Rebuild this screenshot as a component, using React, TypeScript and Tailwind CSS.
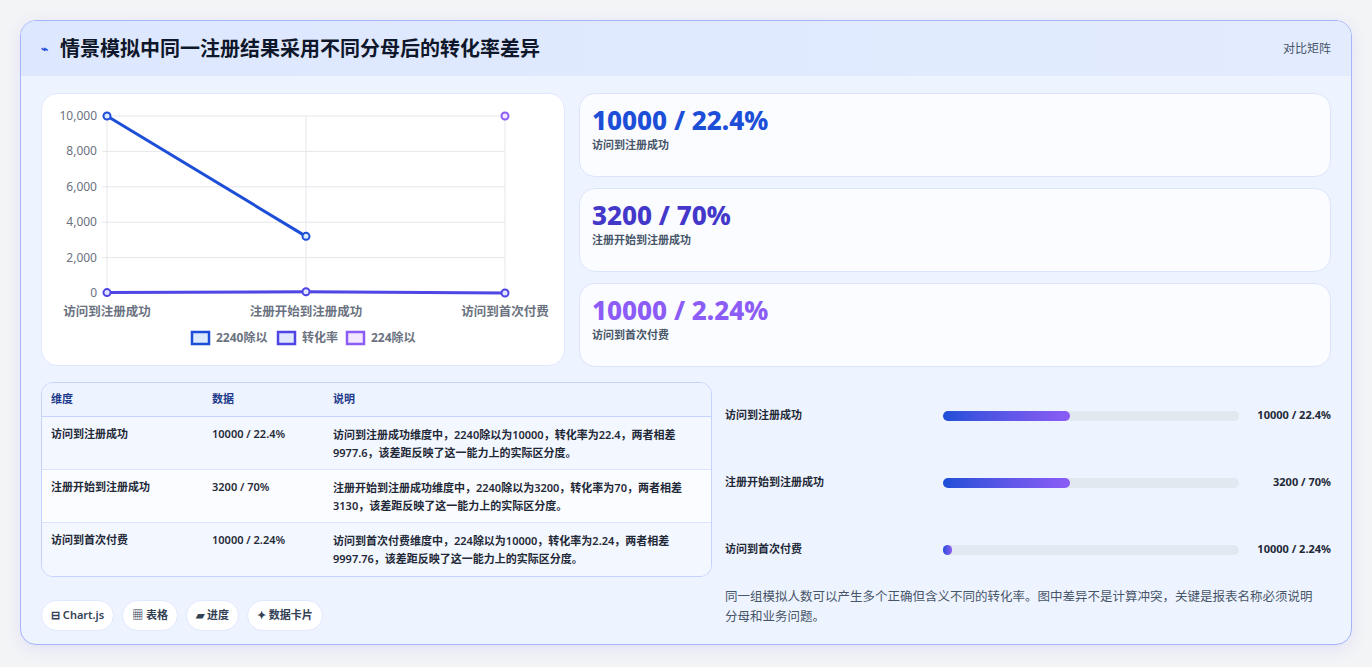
const font = { fontFamily: '"Noto Sans", "Noto Sans CJK SC", sans-serif' };

const stats = [
  { value: "10000 / 22.4%", label: "访问到注册成功", color: "text-[#1d4ed8]" },
  { value: "3200 / 70%", label: "注册开始到注册成功", color: "text-[#4338ca]" },
  { value: "10000 / 2.24%", label: "访问到首次付费", color: "text-[#8b5cf6]" },
];

const rows = [
  {
    dim: "访问到注册成功",
    data: "10000 / 22.4%",
    note: "访问到注册成功维度中，2240除以为10000，转化率为22.4，两者相差9977.6，该差距反映了这一能力上的实际区分度。",
  },
  {
    dim: "注册开始到注册成功",
    data: "3200 / 70%",
    note: "注册开始到注册成功维度中，2240除以为3200，转化率为70，两者相差3130，该差距反映了这一能力上的实际区分度。",
  },
  {
    dim: "访问到首次付费",
    data: "10000 / 2.24%",
    note: "访问到首次付费维度中，224除以为10000，转化率为2.24，两者相差9997.76，该差距反映了这一能力上的实际区分度。",
  },
];

const bars = [
  { label: "访问到注册成功", value: "10000 / 22.4%", pct: 43 },
  { label: "注册开始到注册成功", value: "3200 / 70%", pct: 43 },
  { label: "访问到首次付费", value: "10000 / 2.24%", pct: 3 },
];

function Chart() {
  const x = [105, 304, 503];
  const y = (v: number) => 292 - (v / 10000) * 177;
  const ticks = [0, 2000, 4000, 6000, 8000, 10000];
  return (
    <svg width="524" height="273" viewBox="40 93 524 273" className="block">
      {ticks.map((t) => (
        <g key={t}>
          <line x1={100} x2={503} y1={y(t)} y2={y(t)} stroke="#e5e7eb" />
          <text x={95} y={y(t) + 4} textAnchor="end" fontSize="12" fill="#6b7280">
            {t.toLocaleString()}
          </text>
        </g>
      ))}
      {x.map((xx) => (
        <line key={xx} x1={xx} x2={xx} y1={115} y2={296} stroke="#e5e7eb" />
      ))}
      {["访问到注册成功", "注册开始到注册成功", "访问到首次付费"].map((l, i) => (
        <text key={l} x={x[i]} y={315} textAnchor="middle" fontSize="12.5" fontWeight="700" fill="#6b7280">
          {l}
        </text>
      ))}
      <polyline points={`${x[0]},${y(10000)} ${x[1]},${y(3200)}`} fill="none" stroke="#1d4ed8" strokeWidth="3" />
      <circle cx={x[0]} cy={y(10000)} r="3.5" fill="#dbeafe" stroke="#1d4ed8" strokeWidth="2" />
      <circle cx={x[1]} cy={y(3200)} r="3.5" fill="#dbeafe" stroke="#1d4ed8" strokeWidth="2" />
      <polyline points={`${x[0]},${y(22.4)} ${x[1]},${y(70)} ${x[2]},${y(2.24)}`} fill="none" stroke="#4f46e5" strokeWidth="3" />
      {[22.4, 70, 2.24].map((v, i) => (
        <circle key={i} cx={x[i]} cy={y(v)} r="3.5" fill="#e0e7ff" stroke="#4f46e5" strokeWidth="2" />
      ))}
      <circle cx={x[2]} cy={y(10000)} r="3.5" fill="#f3e8ff" stroke="#8b5cf6" strokeWidth="2" />
      {[
        { x: 190, c: "#1d4ed8", f: "#dbeafe", t: "2240除以" },
        { x: 276, c: "#4f46e5", f: "#e0e7ff", t: "转化率" },
        { x: 345, c: "#8b5cf6", f: "#f3e8ff", t: "224除以" },
      ].map((l) => (
        <g key={l.t}>
          <rect x={l.x} y={331} width={17} height={12} fill={l.f} stroke={l.c} strokeWidth="2.5" />
          <text x={l.x + 24} y={341} fontSize="12" fontWeight="700" fill="#6b7280">
            {l.t}
          </text>
        </g>
      ))}
    </svg>
  );
}

export default function App() {
  return (
    <div style={font} className="min-h-[667px] bg-[#f3f4f6] p-5">
      <div className="rounded-2xl border border-[#a5b4fc] bg-[#eef4ff] overflow-hidden shadow-[0_4px_16px_rgba(99,102,241,0.12)]">
        <div className="flex h-[55px] items-center justify-between bg-gradient-to-r from-[#dde7fe] to-[#e3ecfe] px-5">
          <h1 className="flex items-center gap-3 text-[20px] font-bold text-[#0f172a]">
            <span className="text-[12px] text-[#1d4ed8]">⌁</span>
            情景模拟中同一注册结果采用不同分母后的转化率差异
          </h1>
          <span className="text-[12px] text-[#475569]">对比矩阵</span>
        </div>
        <div className="flex flex-col gap-[15px] px-5 pt-[17px] pb-[13px]">
          <div className="flex gap-[14px]">
            <div className="w-[524px] h-[273px] rounded-2xl border border-[#e0e7ff] bg-white">
              <Chart />
            </div>
            <div className="flex flex-1 flex-col gap-[11px]">
              {stats.map((s) => (
                <div key={s.value} className="h-[84px] rounded-2xl border border-[#dbe4fb] bg-[#fbfcff] px-3 pt-[9px]">
                  <div className={`text-[26px] font-extrabold leading-[34px] ${s.color}`}>{s.value}</div>
                  <div className="text-[11px] font-semibold text-[#475569]">{s.label}</div>
                </div>
              ))}
            </div>
          </div>
          <div className="flex gap-[13px]">
            <div className="w-[671px]">
              <div className="rounded-xl border border-[#c7d2fe] overflow-hidden text-[11px] font-semibold">
                <div className="flex h-[34px] items-center border-b border-[#c7d2fe] bg-[#eef4ff] text-[#1e3a8a]">
                  <div className="w-[170px] pl-[9px]">维度</div>
                  <div className="w-[121px]">数据</div>
                  <div className="flex-1">说明</div>
                </div>
                {rows.map((r, i) => (
                  <div key={r.dim} className={`flex h-[53px] pt-[9px] text-[#1f2937] ${i < 2 ? "border-b border-[#dbe4fb]" : ""} ${i === 1 ? "bg-[#fbfcff]" : "bg-[#f3f7ff]"}`}>
                    <div className="w-[170px] pl-[9px]">{r.dim}</div>
                    <div className="w-[121px]">{r.data}</div>
                    <div className="flex-1 pr-2 leading-[18px]">{r.note}</div>
                  </div>
                ))}
              </div>
              <div className="mt-[23px] flex gap-2 text-[11px] font-semibold text-[#334155]">
                {["⊟ Chart.js", "▦ 表格", "▰ 进度", "✦ 数据卡片"].map((c) => (
                  <span key={c} className="rounded-full border border-[#e0e7ff] bg-white px-[9px] py-[6px]">{c}</span>
                ))}
              </div>
            </div>
            <div className="flex flex-1 flex-col">
              {bars.map((b) => (
                <div key={b.label} className="flex h-[67px] items-center gap-2 text-[11px] font-semibold text-[#1f2937]">
                  <div className="w-[210px] shrink-0">{b.label}</div>
                  <div className="h-[10px] flex-1 rounded-full bg-[#e2e8f0]">
                    <div
                      className="h-full rounded-full bg-gradient-to-r from-[#1d4ed8] to-[#8b5cf6]"
                      style={{ width: `${b.pct}%` }}
                    />
                  </div>
                  <div className="w-[84px] text-right font-bold">{b.value}</div>
                </div>
              ))}
              <p className="mt-[4px] pr-2 text-[12.5px] leading-[20px] text-[#475569]">
                同一组模拟人数可以产生多个正确但含义不同的转化率。图中差异不是计算冲突，关键是报表名称必须说明分母和业务问题。
              </p>
            </div>
          </div>
        </div>
      </div>
    </div>
  );
}
